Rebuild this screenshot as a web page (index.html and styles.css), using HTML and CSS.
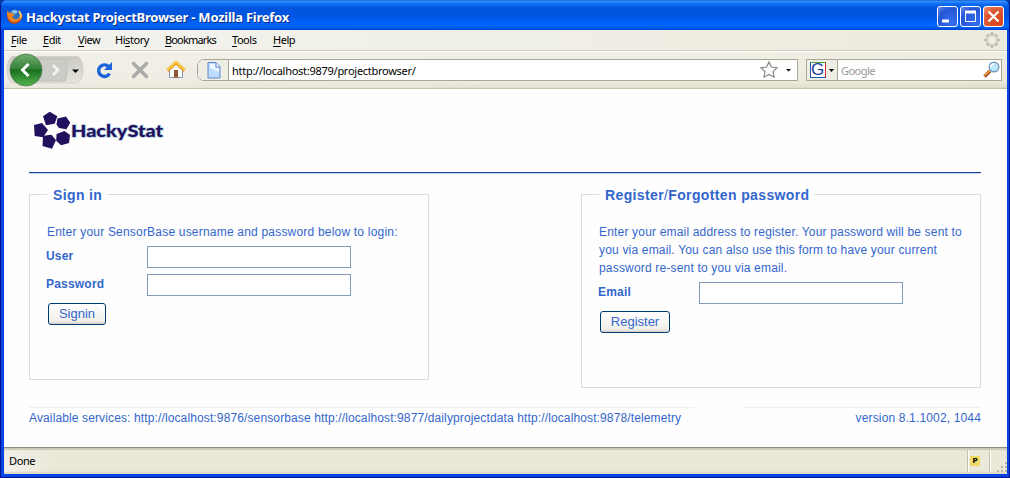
FILE: index.html
```html
<!DOCTYPE html>
<html lang="en">
<head>
<meta charset="utf-8">
<title>Hackystat ProjectBrowser</title>
<link rel="stylesheet" href="styles.css">
</head>
<body>
<div class="window">
  <header class="titlebar">
    <svg class="fox" width="17" height="17" viewBox="0 0 17 17"><circle cx="8.500" cy="8" r="6.500" fill="#2d6fc4"/><path d="M5 4Q9 0 12 4L9 6z" fill="#8cc9ef"/><path d="M1 3L4 5Q6 4 7 6L9 7L6 9Q9 13 13 10Q15 7 12 2Q17 5 16 10Q13 16 7 15Q0 13 1 3" fill="#ef8420"/><path d="M1 4Q1 12 7 14Q13 15 16 9Q14 16 8 16Q0 15 1 4" fill="#b94811"/><path d="M13 3Q16 7 14 10" stroke="#ffd16b" stroke-width="1.500" fill="none"/></svg>
    <h1 class="window-title">Hackystat ProjectBrowser - Mozilla Firefox</h1>
    <div class="controls">
      <span class="control"><svg width="21" height="21"><path d="M4 14h7" stroke="#fff" stroke-width="3"/></svg></span>
      <span class="control"><svg width="21" height="21"><path d="M4.500 5v9.500h10V5" stroke="#fff" fill="none"/><path d="M4 5h11" stroke="#fff" stroke-width="3"/></svg></span>
      <span class="control close"><svg width="21" height="21"><path d="M4.500 4.500l10 10M14.500 4.500l-10 10" stroke="#fff" stroke-width="2.200"/></svg></span>
    </div>
  </header>
  <nav class="menubar">
    <span><u>F</u>ile</span><span><u>E</u>dit</span><span><u>V</u>iew</span><span>Hi<u>s</u>tory</span><span class="long"><u>B</u>ookmarks</span><span><u>T</u>ools</span><span><u>H</u>elp</span>
    <svg class="throbber" width="16" height="16"><g fill="#c3c1b7"><circle cx="8" cy="2" r="2"/><circle cx="12.200" cy="3.800" r="1.900"/><circle cx="14" cy="8" r="1.900"/><circle cx="12.200" cy="12.200" r="1.900"/><circle cx="8" cy="14" r="1.900"/><circle cx="3.800" cy="12.200" r="1.900"/><circle cx="2" cy="8" r="1.900"/><circle cx="3.800" cy="3.800" r="1.900"/></g></svg>
  </nav>
  <div class="toolbar">
    <svg class="nav-icons" width="190" height="36">
      <defs>
        <linearGradient id="green" x2="0" y2="1"><stop stop-color="#70ad6c"/><stop offset=".45" stop-color="#37823a"/><stop offset=".5" stop-color="#19701f"/><stop offset="1" stop-color="#53b44e"/></linearGradient>
        <linearGradient id="pill" x2="0" y2="1"><stop stop-color="#c9c8c2"/><stop offset="1" stop-color="#e5e3dc"/></linearGradient>
      </defs>
      <path d="M8 4.500H74Q79 8 79 18T73 31H8Q3 28 3 18T8 4.500" fill="url(#pill)" stroke="#d3d0c5"/>
      <path d="M32 7H61Q63 10 63 18T61 29H32" fill="#ccccc7" stroke="#bdbdb8"/>
      <circle cx="22" cy="18" r="16" fill="url(#green)" stroke="#4e7950" stroke-width=".8"/>
      <path d="M24.500 12l-6 6 6 6" stroke="#fff" stroke-width="3" fill="none"/>
      <path d="M49 13l5 5-5 5" stroke="#f1f1ef" stroke-width="2.800" fill="none"/>
      <path d="M68 17.500h7l-3.500 3.500z" fill="#000"/>
      <path d="M104.500 14.500A5.800 5.800 0 1 0 105.500 21.500" fill="none" stroke="#1b65d9" stroke-width="3.400"/><path d="M108 10v8h-8z" fill="#1b65d9"/>
      <path d="M129.500 11.500l13 13M142.500 11.500l-13 13" stroke="#aaa" stroke-width="3.600" stroke-linecap="round"/>
      <path d="M165.500 17L172 11l6.500 6v8.500h-13z" fill="#faf9f4" stroke="#8a8fb5"/><path d="M170 18h4v7.500h-4z" fill="#8d5637"/><path d="M163.500 18.500L172 10.500l8.500 8" fill="none" stroke="#e79e1d" stroke-width="3.200"/><path d="M163.500 17.700L172 9.700l8.500 8" stroke="#fbd04d" stroke-width="1.800" fill="none"/>
    </svg>
    <div class="address">
      <div class="page-icon"><svg width="14" height="17"><path d="M1 .5h8l4 4V16H1z" fill="#bddcff" stroke="#6389cc"/><path d="M3 2h5v4h4v4L3 6z" fill="#edf7ff"/><path d="M9 1v4h4" fill="#fff" stroke="#6389cc"/></svg></div>
      <span class="url">http://localhost:9879/projectbrowser/</span>
      <svg class="address-tools" width="37" height="20"><path d="M9 2l2.400 5 5.600.7-4 4 1 5.500-5-2.700-5 2.700 1-5.500-4-4 5.600-.7z" fill="#fff" stroke="#888" stroke-width="1.200"/><path d="M26 9h5l-2.500 2.500z" fill="#000"/></svg>
    </div>
    <div class="search">
      <div class="engine">
        <div class="g-mark">G</div>
        <svg width="5" height="3"><path d="M0 0h5L2.500 3z"/></svg>
      </div>
      <span class="search-label">Google</span>
      <svg class="magnifier" width="18" height="18"><path d="M7 10L1.500 15.500" stroke="#a54d1c" stroke-width="3.500"/><path d="M7 9.500L1.500 14.500" stroke="#f1a64b" stroke-width="1.500"/><circle cx="11" cy="6" r="4.800" fill="#bfe7fb" stroke="#7a9bbb" stroke-width="1.400"/><path d="M8 6q0-3 3-3" stroke="#fff" stroke-width="1.500" fill="none"/></svg>
    </div>
  </div>
  <main class="page">
    <div class="brand">
      <svg width="134" height="42" viewBox="31 109 134 42"><g fill="#22105f"><path d="M49.700 111.700l7.600 4.600-2.600 7.400-8.700 1.600-3-9z"/><path d="M57.500 118.500l8.500-2 4.300 6.200-4 6.600-7.300-1.300-2.500-3.500z"/><path d="M56.500 134l8-3 5.500 4-1 8-8 2.300-4.800-4.500z"/><path d="M43 135.700l8.500-.9 4.500 5.500-4 8.400-9.500-2.700z"/><path d="M34 125l8-2 6 7-5 7.300-8.300-1.300z"/></g><text class="logo-echo" x="71" y="136.500" textLength="92" lengthAdjust="spacingAndGlyphs">HackyStat</text><text class="logo-text" x="71" y="137" textLength="92" lengthAdjust="spacingAndGlyphs">HackyStat</text></svg>
    </div>
    <div class="panels">
      <fieldset class="panel signin">
        <legend>Sign in</legend>
        <p>Enter your SensorBase username and password below to login:</p>
        <div class="field"><label for="user">User</label><input id="user" type="text"></div>
        <div class="field"><label for="password">Password</label><input id="password" type="password"></div>
        <button class="submit-signin" type="button">Signin</button>
      </fieldset>
      <fieldset class="panel register">
        <legend>Register<span class="slash">/</span>Forgotten password</legend>
        <p>Enter your email address to register. Your password will be sent to<br>you via email. You can also use this form to have your current<br>password re-sent to you via email.</p>
        <div class="field"><label for="email">Email</label><input id="email" type="text"></div>
        <button class="submit-register" type="button">Register</button>
      </fieldset>
    </div>
    <footer class="page-footer">
      <div class="services">Available services: http://localhost:9876/sensorbase http://localhost:9877/dailyprojectdata http://localhost:9878/telemetry</div>
      <div class="version">version 8.1.1002, 1044</div>
    </footer>
  </main>
  <div class="statusbar"><span class="done">Done</span><div class="status-icon"><b>P</b></div><div class="grip"><svg width="12" height="12"><path d="M9 1h2v2H9zM5 5h2v2H5zM9 5h2v2H9zM1 9h2v2H1zM5 9h2v2H5zM9 9h2v2H9z" fill="#b5b3a6"/></svg></div></div>
</div>
</body>
</html>
```
FILE: styles.css
```css
* { box-sizing: border-box; }
body { margin: 0; background: #003d9e; }
svg { display: block; flex: none; }
.window {
  width: 1010px; height: 478px; overflow: hidden;
  padding: 0 3px 3px; border: solid #00138c; border-width: 0 1px 1px;
  border-radius: 6px 6px 0 0;
  display: grid; grid-template-rows: 30px 22px 37px 358px 27px;
  background: #0842e4;
  font-family: "Noto Sans", sans-serif; font-size: 11px; color: #000;
}
.titlebar {
  display: flex; align-items: center; margin: 0 -3px; padding: 2px 6px 0 5px;
  background: linear-gradient(#0a56cc 0, #3890fb 1px, #0c6df5 4px, #0054dc 8px, #0055e6 18px, #0065fc 24px, #0064f5 27px, #0040cf 30px);
}
.window-title {
  flex: 1; margin: 2px 0 0 3px; color: #fff; white-space: nowrap;
  font: bold 13px/20px "Noto Sans", sans-serif; letter-spacing: -.24px;
  text-shadow: 1px 1px #0b2b83;
}
.controls { display: flex; gap: 2px; padding-top: 1px; }
.control {
  width: 21px; height: 21px; border: 1px solid #fff; border-radius: 3px;
  background: radial-gradient(circle at 75% 80%, #366ff0, #2456d3 65%, #6390ee);
}
.control.close { background: radial-gradient(circle at 75% 80%, #da4419, #dc5833 60%, #ee9278); }
.menubar {
  display: grid; grid-template-columns: 32px 35px 37px 50px 67px 41px 1fr 16px;
  padding: 0 7px 0 7px; line-height: 19px; letter-spacing: -.45px;
  border-bottom: 1px solid #fff; box-shadow: inset 0 -1px #d2cdb9;
  background: linear-gradient(90deg, #f3f3ef, #edebdd);
}
.menubar u { text-underline-offset: 2px; }
.menubar .long { letter-spacing: -.85px; }
.throbber { margin-top: 2px; }
.toolbar {
  display: flex; padding-right: 5px; border-bottom: 1px solid #c8c3ad;
  background: linear-gradient(90deg, #f2f1eb99, transparent), linear-gradient(#f1efe4, #ebe8d9 85%, #dedac7);
}
.address, .search {
  display: flex; align-items: center; height: 22px; margin-top: 7px;
  border: 1px solid #aaa695; background: #fff;
}
.address { width: 601px; margin-left: 3px; border-radius: 7px 0 0 7px; }
.page-icon { width: 31px; height: 20px; padding: 2px 9px; border-right: 1px solid #aaa695; background: #efeee5; border-radius: 6px 0 0 6px; }
.url { flex: 1; margin-left: 3px; letter-spacing: -.27px; }
.search { width: 196px; margin-left: 8px; }
.engine { display: flex; align-items: center; gap: 3px; width: 31px; height: 20px; padding-left: 3px; border-right: 1px solid #aaa695; background: #efeee5; }
.g-mark { width: 16px; height: 16px; border: 1px solid #46a546; border-left-color: #175abb; border-right-color: #d52a2a; border-bottom-color: #175abb; background: #fff; color: #163d9e; font: 17px/14px "Liberation Sans", sans-serif; text-align: center; text-indent: -1px; }
.search-label { flex: 1; margin-left: 3px; color: #999; letter-spacing: -.55px; }
.page { background: #fefefe; color: #3366cc; padding: 20px 26px 0 25px; font: 12px/18px "Liberation Sans", sans-serif; }
.brand { height: 64px; padding: 0 0 0 2px; margin-bottom: 14px; box-shadow: 0 1px #c5d4f4; border-bottom: 1px solid #21489a; }
.logo-text, .logo-echo { font: 900 17px Lato, sans-serif; fill: #22105f; }
.logo-echo { fill: none; stroke: #b4d2e0; stroke-width: 1.5px; }
.panels { display: flex; justify-content: space-between; height: 220px; }
.panel { width: 400px; min-width: 0; height: 193px; margin: 0; padding: 0 17px; border: 1px solid #ddd; }
.panel.register { height: 201px; }
.panel legend { height: 14px; padding: 0 5px 0 6px; font-weight: bold; font-size: 14px; line-height: 16px; letter-spacing: .37px; white-space: nowrap; }
.slash { font-weight: normal; }
.panel p { margin: 22px 0 5px; line-height: 18px; white-space: nowrap; letter-spacing: .2px; }
.panel.register p { letter-spacing: .18px; }
.field { display: flex; height: 28px; }
.field label { width: 100px; margin-left: -1px; line-height: 20px; font-weight: bold; letter-spacing: .2px; }
.field input { width: 204px; height: 22px; margin-left: 1px; padding: 1px 4px; border: 1px solid #7f9db9; background: #fff; font: inherit; }
.panel button { display: block; height: 22px; margin: 1px 0 0 1px; padding: 0; border: 1px solid #003c74; border-radius: 3px; background: linear-gradient(#fff, #f0efe9 85%, #d6d0c5); color: #3366cc; font: 13px/20px "Liberation Sans", sans-serif; }
.submit-signin { width: 58px; }
.submit-register { width: 70px; }
.page-footer { display: flex; justify-content: space-between; line-height: 20px; white-space: nowrap; }
.services { width: 666px; border-top: 1px solid #efefeb; letter-spacing: .125px; }
.version { width: 238px; border-top: 1px solid #efefeb; text-align: right; letter-spacing: .15px; }
.statusbar { display: flex; align-items: center; border-top: 1px solid #8e8b7c; box-shadow: inset 0 2px 1px #cbc8b6, inset 0 -2px 2px #dcd8c6; background: linear-gradient(90deg, #f1f0e9, #ebe8d9 50px); }
.done { flex: 1; padding: 0 0 1px 5px; letter-spacing: -.4px; }
.status-icon, .grip { height: 22px; border-left: 1px solid #c5c1ae; box-shadow: inset 1px 0 #fff; }
.status-icon { width: 22px; padding: 6px 0 0 2px; }
.status-icon b { display: block; width: 10px; height: 10px; background: #eedb67; font: bold 7px/10px "DejaVu Sans", sans-serif; text-align: center; }
.grip { width: 18px; padding: 11px 0 0 6px; }
```
